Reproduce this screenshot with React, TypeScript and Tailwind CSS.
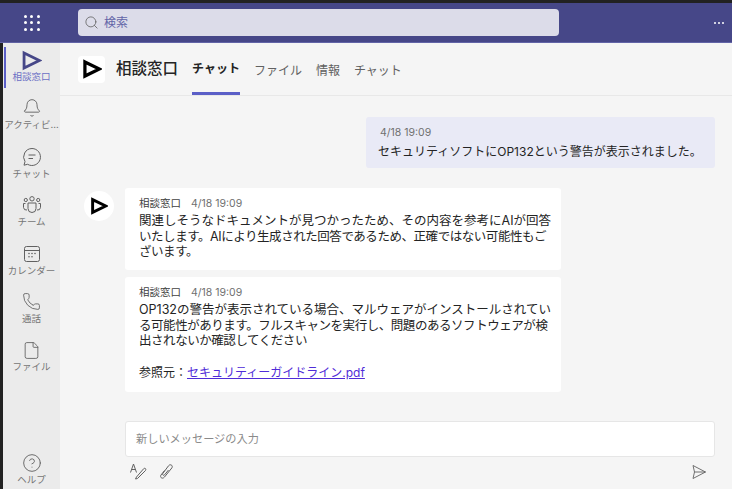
import type { ReactNode } from "react";
import { Bell, Phone, File, CircleHelp, Search } from "lucide-react";

const Logo = ({ size, color = "#000", stroke = 3.9 }: { size: number; color?: string; stroke?: number }) => (
  <svg width={size} height={size} viewBox="0 0 24 24" fill="none">
    <path d="M3.5 3.5 L21 12 L3.5 20.5 Z" stroke={color} strokeWidth={stroke} strokeLinejoin="miter" />
  </svg>
);

const ChatIcon = () => (
  <svg width="20" height="20" viewBox="0 0 20 20" fill="none" stroke="currentColor" strokeWidth="1">
    <path d="M10 1.5 A8.5 8.5 0 1 1 5.6 17.3 L2 18.2 L3 14.6 A8.5 8.5 0 0 1 10 1.5 Z" />
    <path d="M6.5 8 H13.5 M6.5 11.5 H11" />
  </svg>
);

const TeamIcon = () => (
  <svg width="20" height="20" viewBox="0 0 20 20" fill="none" stroke="currentColor" strokeWidth="1">
    <circle cx="10" cy="3.8" r="2.2" />
    <circle cx="3.8" cy="5" r="1.6" />
    <circle cx="16.2" cy="5" r="1.6" />
    <path d="M6 8 H14 V13.5 A4 4 0 0 1 6 13.5 Z" />
    <path d="M3.5 8.5 H1.5 V12.5 A3 3 0 0 0 5 15 M16.5 8.5 H18.5 V12.5 A3 3 0 0 1 15 15" />
  </svg>
);

const CalendarIcon = () => (
  <svg width="20" height="20" viewBox="0 0 20 20" fill="none" stroke="currentColor" strokeWidth="1">
    <rect x="2.5" y="2.5" width="15" height="15" rx="2" />
    <path d="M2.5 6.5 H17.5" />
    <g fill="currentColor" stroke="none">
      <circle cx="7" cy="9.5" r="0.8" />
      <circle cx="10" cy="9.5" r="0.8" />
      <circle cx="13" cy="9.5" r="0.8" />
      <circle cx="7" cy="12.8" r="0.8" />
      <circle cx="10" cy="12.8" r="0.8" />
    </g>
  </svg>
);

const Rail = ({ icon, label, active }: { icon: ReactNode; label: string; active?: boolean }) => (
  <div className={`relative flex h-[48.4px] shrink-0 flex-col items-center pt-[3px] ${active ? "text-[#5b5fc7]" : "text-[#616161]"}`}>
    {active && <div className="absolute left-[1px] top-0 h-[41px] w-[1.5px] bg-[#5b5fc7]" />}
    <div className="flex h-[20px] items-center justify-center">{icon}</div>
    <div className={`w-[56px] truncate text-center text-[9.5px] leading-[13px] ${active ? "text-[#6b6fc5]" : "text-[#757575]"}`}>{label}</div>
  </div>
);

const Bubble = ({ children, className }: { children: ReactNode; className: string }) => (
  <div className={`w-[436px] rounded-[3px] bg-white pl-[14px] pr-[7px] pt-[9px] ${className}`}>
    <div className="flex gap-[10px] text-[10.5px] leading-[14px]">
      <span className="text-[#424242]">相談窓口</span>
      <span className="text-[#707070]">4/18 19:09</span>
    </div>
    <div className="mt-[2px] whitespace-nowrap text-[12.5px] leading-[15.5px] text-[#242424]">{children}</div>
  </div>
);

export default function App() {
  return (
    <div className="flex h-[489px] w-[732px] flex-col overflow-hidden bg-[#222222] pt-[3px] font-['Inter','Noto_Sans_CJK_JP',sans-serif]">
      <header className="flex h-[40px] shrink-0 items-center border-b border-[#6264a7] bg-[#464788] pl-[3px]">
        <div className="grid w-[57px] place-items-center">
          <div className="grid grid-cols-3 gap-[3.5px]">
            {Array.from({ length: 9 }).map((_, i) => (
              <span key={i} className="h-[3px] w-[3px] rounded-full bg-white" />
            ))}
          </div>
        </div>
        <div className="ml-[18px] flex h-[27px] w-[481px] items-center gap-[5px] rounded-[4px] bg-[#dcdce9] px-[6px]">
          <Search size={15} strokeWidth={1.3} className="text-[#616161]" />
          <span className="text-[12px] text-[#6264a7]">検索</span>
        </div>
        <div className="ml-auto mr-[8px] flex gap-[2px]">
          <span className="h-[2px] w-[2px] rounded-full bg-white" />
          <span className="h-[2px] w-[2px] rounded-full bg-white" />
          <span className="h-[2px] w-[2px] rounded-full bg-white" />
        </div>
      </header>

      <div className="flex min-h-0 flex-1 pl-[3px]">
        <aside className="flex w-[57px] shrink-0 flex-col bg-[#ebebeb] pt-[4px] shadow-[1px_0_3px_rgba(0,0,0,0.06)]">
          <Rail active label="相談窓口" icon={<Logo size={21} color="#464788" stroke={3.2} />} />
          <Rail label="アクティビ..." icon={<Bell size={20} strokeWidth={1.1} />} />
          <Rail label="チャット" icon={<ChatIcon />} />
          <Rail label="チーム" icon={<TeamIcon />} />
          <Rail label="カレンダー" icon={<CalendarIcon />} />
          <Rail label="通話" icon={<Phone size={19} strokeWidth={1.1} />} />
          <Rail label="ファイル" icon={<File size={19} strokeWidth={1.1} />} />
          <div className="mt-auto h-[39px]">
            <Rail label="ヘルプ" icon={<CircleHelp size={20} strokeWidth={1.1} />} />
          </div>
        </aside>

        <main className="flex min-w-0 flex-1 flex-col bg-[#f5f5f5]">
          <div className="flex h-[53px] shrink-0 items-center border-b border-[#e8e8e8] pl-[18px]">
            <div className="grid h-[27px] w-[27px] place-items-center rounded-[4px] bg-white">
              <Logo size={20} />
            </div>
            <div className="ml-[11px] text-[15.5px] font-medium text-[#242424]">相談窓口</div>
            <nav className="ml-[14px] flex h-full gap-[14px] text-[12px]">
              <div className="flex h-full flex-col justify-center border-b-[3px] border-[#5b5fc7] pt-[3px] font-semibold text-[#242424]">チャット</div>
              <div className="flex h-full items-center pt-[3px] text-[#616161]">ファイル</div>
              <div className="flex h-full items-center pt-[3px] text-[#616161]">情報</div>
              <div className="flex h-full items-center pt-[3px] text-[#616161]">チャット</div>
            </nav>
          </div>

          <div className="flex flex-1 flex-col pt-[21px] pr-[17px]">
            <div className="ml-auto h-[51px] w-[349px] rounded-[3px] bg-[#e9eaf6] pl-[12px] pt-[9px]">
              <div className="pl-[2px] text-[10.5px] leading-[14px] text-[#707070]">4/18 19:09</div>
              <div className="mt-[3px] text-[12px] leading-[17px] text-[#242424]">セキュリティソフトにOP132という警告が表示されました。</div>
            </div>

            <div className="mt-[20px] flex pl-[24px]">
              <div className="mt-[3px] grid h-[30px] w-[30px] shrink-0 place-items-center rounded-full bg-white">
                <Logo size={18} />
              </div>
              <div className="ml-[11px] flex flex-col gap-[7px]">
                <Bubble className="h-[82px]">
                  <div>関連しそうなドキュメントが見つかったため、その内容を参考にAIが回答</div>
                  <div className="tracking-[-0.45px]">いたします。AIにより生成された回答であるため、正確ではない可能性もご</div>
                  <div className="tracking-[-0.45px]">ざいます。</div>
                </Bubble>
                <Bubble className="h-[115px]">
                  <div>OP132の警告が表示されている場合、マルウェアがインストールされてい</div>
                  <div className="tracking-[-0.45px]">る可能性があります。フルスキャンを実行し、問題のあるソフトウェアが検</div>
                  <div className="tracking-[-0.45px]">出されないか確認してください</div>
                  <div className="h-[16px]" />
                  <div className="text-[12px]">
                    参照元：<a className="text-[#4f2cd8] underline">セキュリティーガイドライン.pdf</a>
                  </div>
                </Bubble>
              </div>
            </div>

            <div className="mt-[29px] ml-[65px] flex h-[36px] items-center rounded-[3px] border border-[#e6e6e6] bg-white px-[10px] text-[11.2px] text-[#8a8a8a]">
              新しいメッセージの入力
            </div>
            <div className="mt-[6px] ml-[65px] flex items-center gap-[12px] pl-[5px] text-[#616161]">
              <svg width="17" height="17" viewBox="0 0 17 17" fill="none" stroke="currentColor" strokeWidth="1">
                <path d="M0.5 9.5 L3.5 1 L6.5 9.5 M1.6 6.5 H5.4" />
                <path d="M6.5 14 L5.5 16 L7.5 15.5 L15.5 7.5 C16.5 6 15 4.5 13.7 5.7 Z" />
              </svg>
              <svg width="15" height="15" viewBox="0 0 15 15" fill="none" stroke="currentColor" strokeWidth="1">
                <path d="M5.5 6.5 L2 11 C0.5 13.5 3.5 15.5 5.5 13 L12.8 4 C14.5 1.5 11.2 -0.5 9.5 1.8 L3.8 9.5 C3 11 4.6 12 5.6 10.8 L9.5 6" />
              </svg>
              <svg className="ml-auto mr-[8px]" width="16" height="16" viewBox="0 0 16 16" fill="none" stroke="currentColor" strokeWidth="0.9">
                <path d="M2 1.5 L14.5 8 L2 14.5 L3.5 8 Z M3.5 8 H14.5" />
              </svg>
            </div>
          </div>
        </main>
      </div>
    </div>
  );
}
